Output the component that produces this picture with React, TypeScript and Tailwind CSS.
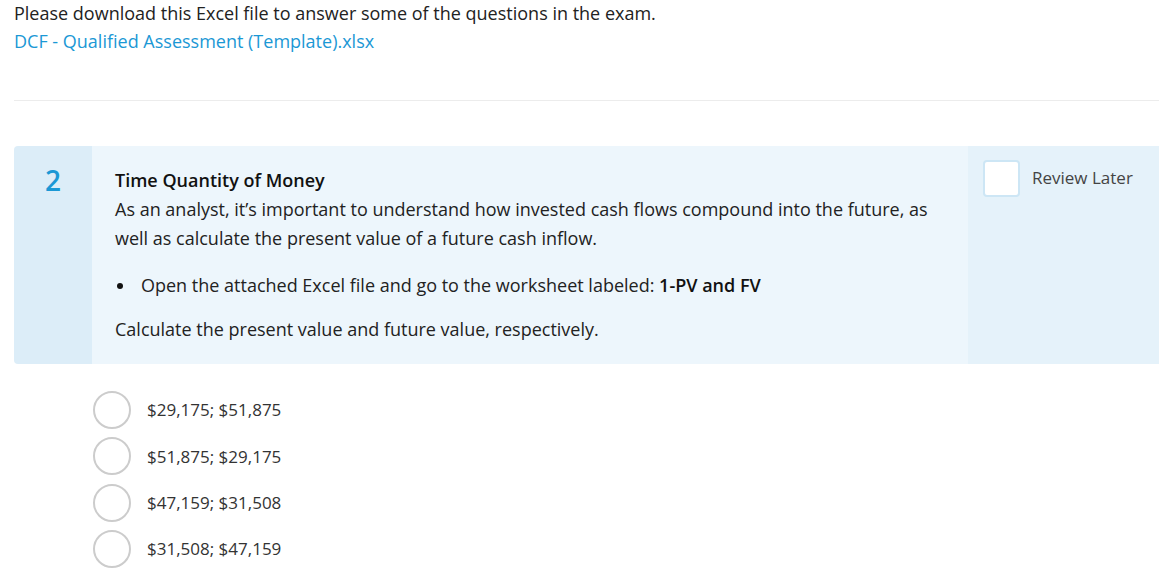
import React from "react";

const options = ["$29,175; $51,875", "$51,875; $29,175", "$47,159; $31,508", "$31,508; $47,159"];

export default function App() {
  return (
    <div className="min-h-[586px] bg-white font-['Open_Sans',sans-serif] text-[#222]">
      <div className="pl-[14px]">
        <p className="-mt-[1px] text-[18px] leading-[28px]">Please download this Excel file to answer some of the questions in the exam.</p>
        <a className="block text-[18px] leading-[28px] text-[#1b98d5]">DCF - Qualified Assessment (Template).xlsx</a>
        <div className="mt-[45px] border-t border-[#ececec]" />
      </div>

      <div className="mt-[45px] ml-[14px] flex h-[218px] overflow-hidden rounded-l-[4px]">
        <div className="w-[78px] shrink-0 bg-[#dcedf8] pt-[16px] text-center text-[28px] leading-[36px] font-semibold text-[#1b98d5]">2</div>
        <div className="flex-1 bg-[#edf6fc] pl-[23px] pr-[30px] pt-[20px] text-[18px] leading-[29px] text-[#222]">
          <p className="font-semibold text-[#111]">Time Quantity of Money</p>
          <p>As an analyst, it’s important to understand how invested cash flows compound into the future, as well as calculate the present value of a future cash inflow.</p>
          <ul className="mt-[18px]">
            <li className="flex items-center">
              <span className="ml-[2px] mr-[18px] h-[6px] w-[6px] rounded-full bg-[#111]" />
              <span>Open the attached Excel file and go to the worksheet labeled: <b className="font-semibold text-[#111]">1-PV and FV</b></span>
            </li>
          </ul>
          <p className="mt-[15px]">Calculate the present value and future value, respectively.</p>
        </div>
        <div className="w-[191px] shrink-0 bg-[#e5f2fa] pl-[15px] pt-[14px]">
          <label className="flex items-start gap-[12px]">
            <span className="h-[37px] w-[37px] shrink-0 rounded-[4px] border-2 border-[#cde6f5] bg-white" />
            <span className="pt-[6px] text-[17px] leading-[24px] text-[#444]">Review Later</span>
          </label>
        </div>
      </div>

      <div className="ml-[93px] mt-[27px] flex flex-col gap-[8.33px]">
        {options.map((o) => (
          <label key={o} className="flex items-center gap-[16px]">
            <span className="h-[38px] w-[38px] shrink-0 rounded-full border-2 border-[#cccccc] bg-white" />
            <span className="text-[17px] text-[#333]">{o}</span>
          </label>
        ))}
      </div>
    </div>
  );
}
